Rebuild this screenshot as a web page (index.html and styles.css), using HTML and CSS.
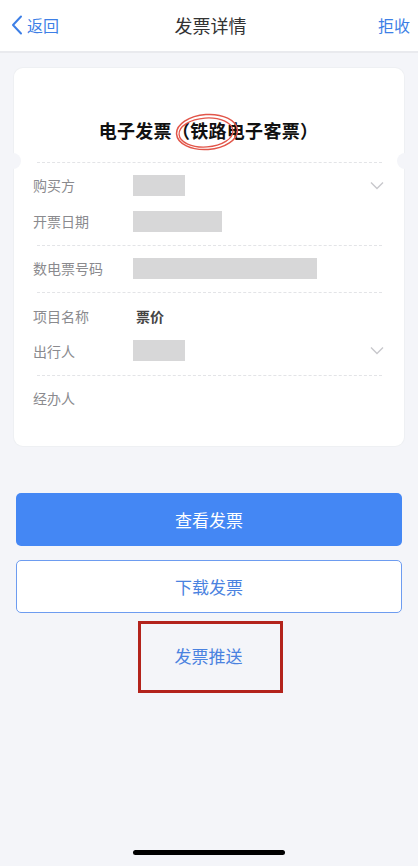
FILE: index.html
```html
<!DOCTYPE html>
<html lang="zh-CN">
<head>
<meta charset="utf-8">
<title>发票详情</title>
<link rel="stylesheet" href="styles.css">
</head>
<body>
<div class="page">
  <header class="nav">
    <div class="nav-back">
      <svg class="back-icon" width="12" height="20" viewBox="0 0 12 20"><path d="M10 1.5 L2 10 L10 18.5" fill="none" stroke="#3d7fe6" stroke-width="2" stroke-linecap="round" stroke-linejoin="round"/></svg>
      <span>返回</span>
    </div>
    <div class="nav-title">发票详情</div>
    <div class="nav-right">拒收</div>
  </header>

  <section class="card">
    <div class="card-title">
      <span class="title-text">电子发票（铁路电子客票）</span>
      <svg class="stamp" width="64" height="38" viewBox="0 0 64 38"><ellipse cx="32" cy="19" rx="30.5" ry="17.5" fill="none" stroke="#e2564a" stroke-width="1.5" transform="rotate(-4 32 19)"/><ellipse cx="31" cy="19.5" rx="27" ry="14.5" fill="none" stroke="#e2564a" stroke-width="1.3" transform="rotate(-4 31 19.5)"/></svg>
    </div>
    <div class="notch notch-l"></div>
    <div class="notch notch-r"></div>
    <div class="dash"></div>
    <div class="group g1">
      <div class="row"><span class="label">购买方</span><span class="mask w52"></span><svg class="chev" width="14" height="9" viewBox="0 0 14 9"><path d="M1 1.5 L7 7.5 L13 1.5" fill="none" stroke="#c8c8cc" stroke-width="1.4"/></svg></div>
      <div class="row"><span class="label">开票日期</span><span class="mask w89"></span></div>
    </div>
    <div class="dash"></div>
    <div class="group g2">
      <div class="row"><span class="label">数电票号码</span><span class="mask w184"></span></div>
    </div>
    <div class="dash"></div>
    <div class="group g3">
      <div class="row"><span class="label">项目名称</span><span class="value">票价</span></div>
      <div class="row"><span class="label">出行人</span><span class="mask w52"></span><svg class="chev" width="14" height="9" viewBox="0 0 14 9"><path d="M1 1.5 L7 7.5 L13 1.5" fill="none" stroke="#c8c8cc" stroke-width="1.4"/></svg></div>
    </div>
    <div class="dash"></div>
    <div class="group g4">
      <div class="row"><span class="label">经办人</span></div>
    </div>
  </section>

  <div class="actions">
    <div class="btn btn-primary">查看发票</div>
    <div class="btn btn-outline">下载发票</div>
    <div class="push-box"><span class="push-text">发票推送</span></div>
  </div>

  <div class="home-indicator"></div>
</div>
</body>
</html>
```
FILE: styles.css
```css
* { box-sizing: border-box; }
html, body { margin: 0; padding: 0; }
body {
  background: #f4f5f9;
  font-family: "Noto Sans CJK SC", "Noto Sans", sans-serif;
  color: #333;
}
.page {
  min-height: 866px;
  display: flex;
  flex-direction: column;
}
.nav {
  height: 53px;
  background: #fff;
  border-bottom: 2px solid #e9eaee;
  display: flex;
  align-items: center;
  justify-content: space-between;
  padding: 0 8px 2px 11px;
}
.nav-back {
  display: flex;
  align-items: center;
  gap: 4px;
  color: #3d7fe6;
  font-size: 16px;
  width: 80px;
}
.back-icon { display: block; }
.nav-title {
  font-size: 18px;
  color: #333;
  flex: 1;
  text-align: center;
}
.nav-right {
  width: 80px;
  text-align: right;
  color: #3d7fe6;
  font-size: 16px;
}
.card {
  margin: 15px 14px 0;
  background: #fff;
  border-radius: 9px;
  position: relative;
  padding: 0 22px 0 19px;
  box-shadow: 0 0 0 1px #eef0f3;
}
.card-title {
  padding-top: 50px;
  height: 94px;
  text-align: center;
  position: relative;
}
.title-text {
  font-size: 18px;
  font-weight: 700;
  color: #111;
  line-height: 24px;
  letter-spacing: 0.3px;
  padding-left: 2px;
}
.stamp {
  position: absolute;
  left: 142px;
  top: 45px;
}
.notch {
  position: absolute;
  width: 16px;
  height: 16px;
  border-radius: 50%;
  background: #f4f5f9;
  top: 85px;
}
.notch-l { left: -9px; }
.notch-r { right: -9px; }
.dash {
  height: 1px;
  margin-left: 4px;
  border-top: 1px dashed #e3e4e7;
}
.row {
  height: 36px;
  display: flex;
  align-items: center;
}
.g1 { padding: 4px 0 6px; }
.g2 { padding: 4px 0 6px; }
.g3 { padding: 5px 0 7px; }
.g3 .row { height: 35px; }
.g4 { padding: 4px 0 30px; }
.label {
  width: 100px;
  font-size: 14px;
  color: #8a8a8e;
  flex-shrink: 0;
}
.value {
  font-size: 14px;
  font-weight: 700;
  color: #444;
  padding-left: 3px;
}
.mask {
  height: 21px;
  background: #d7d7d8;
  display: block;
}
.w52 { width: 52px; }
.w89 { width: 89px; }
.w184 { width: 184px; }
.chev {
  margin-left: auto;
  margin-right: -2px;
  display: block;
}
.actions {
  margin-top: 47px;
  padding: 0 16px;
  display: flex;
  flex-direction: column;
  align-items: center;
}
.btn {
  width: 100%;
  height: 53px;
  border-radius: 5px;
  display: flex;
  align-items: center;
  justify-content: center;
  font-size: 17px;
}
.btn-primary {
  background: #4487f4;
  color: #fff;
}
.btn-outline {
  margin-top: 14px;
  background: #fff;
  border: 1px solid #6d9cf0;
  color: #4a82e0;
}
.push-box {
  margin-top: 8px;
  width: 145px;
  height: 72px;
  border: 3px solid #b3231c;
  display: flex;
  align-items: center;
  justify-content: center;
  margin-left: 3px;
}
.push-text {
  color: #4a82e0;
  font-size: 17px;
  margin-left: -4px;
  margin-top: -4px;
}
.home-indicator {
  margin: auto auto 11px;
  width: 152px;
  height: 5px;
  border-radius: 3px;
  background: #000;
}
```
